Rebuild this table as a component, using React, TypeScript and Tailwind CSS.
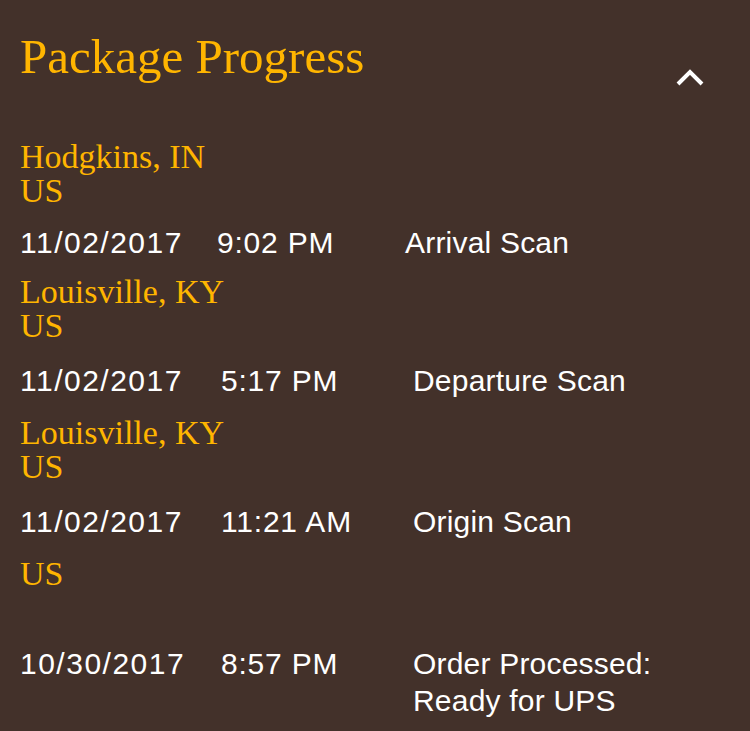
type Scan = {
  date: string;
  time: string;
  activity: string;
};

type Stop = {
  city: string;
  country: string;
  scans: Scan[];
  cols: string;
  gap: string;
};

const stops: Stop[] = [
  {
    city: 'Hodgkins, IN',
    country: 'US',
    scans: [{ date: '11/02/2017', time: '9:02 PM', activity: 'Arrival Scan' }],
    cols: 'grid-cols-[197px_188px_1fr]',
    gap: 'mt-[16px] mb-[14px]',
  },
  {
    city: 'Louisville, KY',
    country: 'US',
    scans: [{ date: '11/02/2017', time: '5:17 PM', activity: 'Departure Scan' }],
    cols: 'grid-cols-[201px_192px_1fr]',
    gap: 'mt-[19px] mb-[17px]',
  },
  {
    city: 'Louisville, KY',
    country: 'US',
    scans: [{ date: '11/02/2017', time: '11:21 AM', activity: 'Origin Scan' }],
    cols: 'grid-cols-[201px_192px_1fr]',
    gap: 'mt-[19px] mb-[17px]',
  },
  {
    // no city on the origin record, country only
    city: '',
    country: 'US',
    scans: [{ date: '10/30/2017', time: '8:57 PM', activity: 'Order Processed: Ready for UPS' }],
    cols: 'grid-cols-[201px_192px_1fr]',
    gap: 'mt-[20px]',
  },
];

function ChevronUp() {
  return (
    <svg width="32" height="20" viewBox="0 0 32 20" className="mt-[39px] shrink-0" fill="none">
      <path d="M4 16 L16 4 L28 16" stroke="#ffffff" strokeWidth="4" strokeLinejoin="miter" />
    </svg>
  );
}

function StopBlock({ stop }: { stop: Stop }) {
  // blank city still takes its line so the rows stay in step
  const lines = stop.city ? [stop.city, stop.country] : [stop.country, ''];

  return (
    <div>
      <div className="font-['Liberation_Serif',serif] text-[34px] leading-[34px] text-[#ffb500]">
        {lines.map((line, i) => (
          <div key={i} className="h-[34px]">
            {line}
          </div>
        ))}
      </div>

      {stop.scans.map((scan, i) => (
        <div
          key={i}
          className={`${stop.gap} grid ${stop.cols} font-['Liberation_Sans',Arial,sans-serif] text-[30px] leading-[37px] text-white`}
        >
          <span className="tracking-[1.5px]">{scan.date}</span>
          <span className="tracking-[0.8px]">{scan.time}</span>
          <span className="tracking-[0.2px]">{scan.activity}</span>
        </div>
      ))}
    </div>
  );
}

export default function App() {
  return (
    <div className="w-[750px] h-[731px] overflow-hidden bg-[#43312a] pl-[20px] pr-[44px] pt-[29px]">
      <div className="flex items-start justify-between">
        <h1 className="font-['Liberation_Serif',serif] text-[49px] leading-[56px] font-normal text-[#ffb500]">
          Package Progress
        </h1>
        <ChevronUp />
      </div>

      <div className="mt-[52px]">
        {stops.map((stop, i) => (
          <StopBlock key={i} stop={stop} />
        ))}
      </div>
    </div>
  );
}
